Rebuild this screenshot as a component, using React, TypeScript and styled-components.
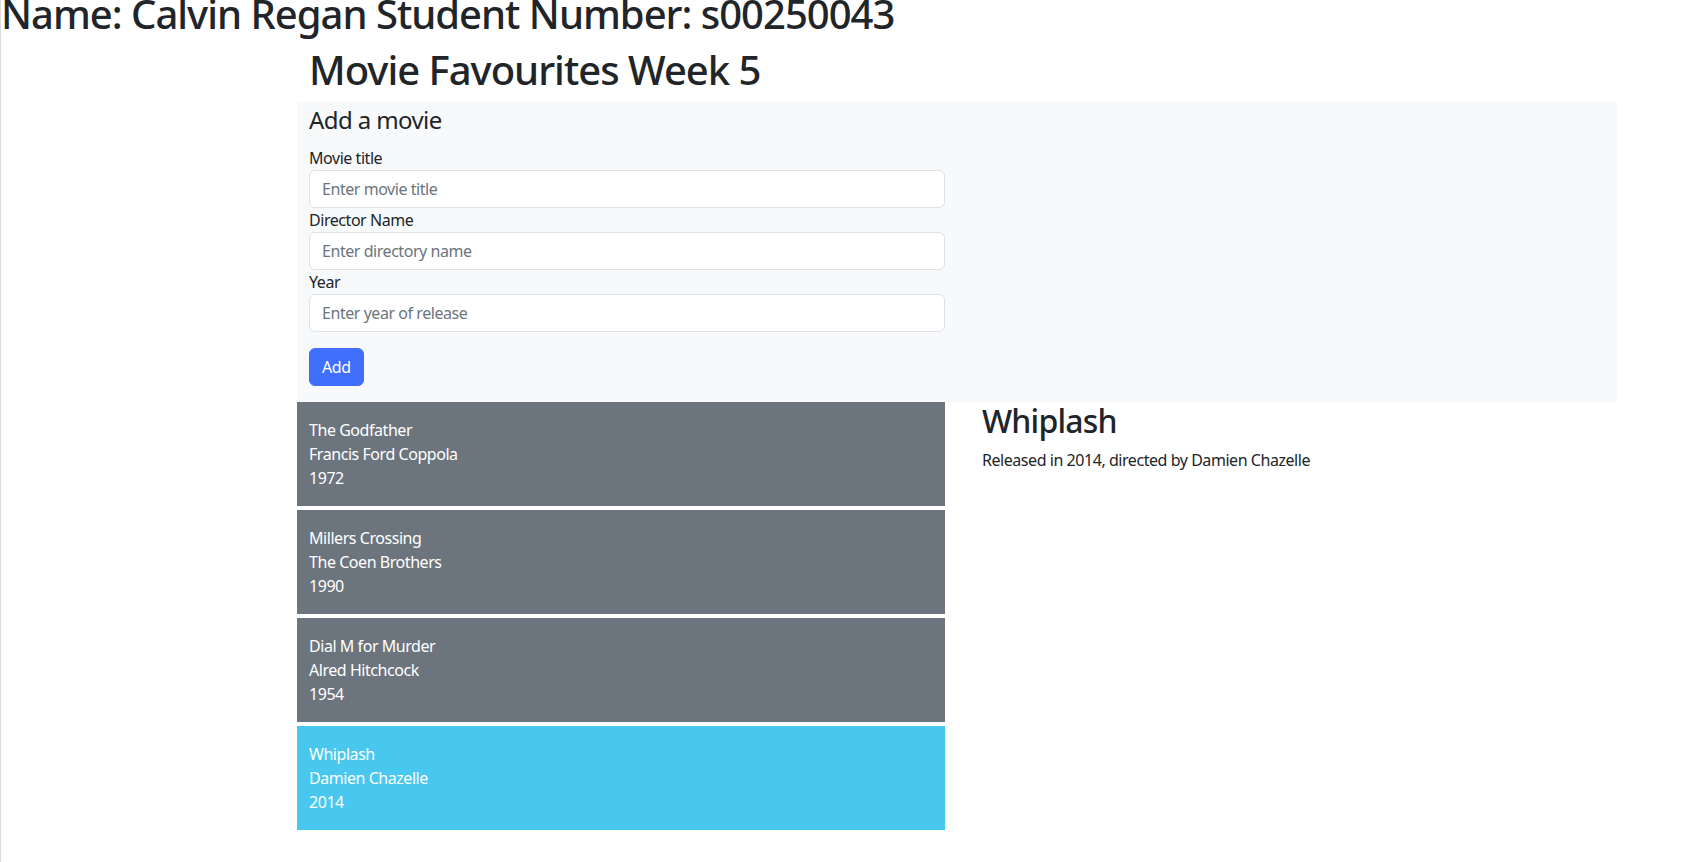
import styled, { createGlobalStyle } from "styled-components";

const GlobalStyle = createGlobalStyle`
  * { box-sizing: border-box; }
  body {
    margin: 0;
    min-height: 862px;
    border-left: 1px solid #dcdcdc;
    background: #fff;
    color: #212529;
    font-family: "Noto Sans", "Open Sans", sans-serif;
    font-size: 16px;
    line-height: 1.5;
    letter-spacing: -0.45px;
  }
`;

// the reference is scrolled down a few pixels
const Page = styled.div`
  margin-top: -10px;
`;

const Heading = styled.h1`
  margin: 0 0 8px;
  font-size: 40px;
  font-weight: 500;
  line-height: 1.2;
  letter-spacing: -1px;
`;

const Container = styled.div`
  width: 1320px;
  margin-left: 296px;
`;

const Title = styled(Heading)`
  padding: 0 12px;
`;

const FormPanel = styled.div`
  padding: 0 12px 16px;
  background: #f8f9fa;
`;

const Form = styled.form`
  display: flex;
  flex-direction: column;
  align-items: flex-start;
  width: 636px;
`;

const Legend = styled.div`
  margin-bottom: 8px;
  font-size: 24px;
  line-height: 1.5;
  letter-spacing: -0.6px;
`;

const Label = styled.label`
  display: block;
`;

const Input = styled.input`
  display: block;
  width: 100%;
  padding: 6px 12px;
  border: 1px solid #dee2e6;
  border-radius: 6px;
  background: #fff;
  color: #212529;
  font: inherit;
  line-height: 1.5;
  letter-spacing: inherit;
  &::placeholder { color: #6c757d; }
`;

const AddButton = styled.button`
  margin-top: 16px;
  padding: 6px 12px;
  border: 1px solid #406efd;
  border-radius: 6px;
  background: #406efd;
  color: #fff;
  font: inherit;
  line-height: 1.5;
  letter-spacing: inherit;
`;

const Lower = styled.div`
  display: grid;
  grid-template-columns: 648px 1fr;
  column-gap: 37px;
`;

const MovieList = styled.div`
  display: flex;
  flex-direction: column;
  gap: 4px;
`;

const MovieCard = styled.div<{ $active?: boolean }>`
  padding: 16px 12px;
  background: ${(p) => (p.$active ? "#48c8ee" : "#6c757d")};
  color: #fff;
`;

const Details = styled.div``;

const DetailTitle = styled.h2`
  margin: 0 0 8px;
  font-size: 32px;
  font-weight: 500;
  line-height: 1.2;
  letter-spacing: -0.8px;
`;

const DetailText = styled.p`
  margin: 0;
`;

const movies = [
  { title: "The Godfather", director: "Francis Ford Coppola", year: 1972 },
  { title: "Millers Crossing", director: "The Coen Brothers", year: 1990 },
  { title: "Dial M for Murder", director: "Alred Hitchcock", year: 1954 },
  { title: "Whiplash", director: "Damien Chazelle", year: 2014 },
];

const App = () => {
  const selected = movies[3];

  return (
    <Page>
      <GlobalStyle />
      <Heading>Name: Calvin Regan Student Number: s00250043</Heading>
      <Container>
        <Title>Movie Favourites Week 5</Title>
        <FormPanel>
          <Form onSubmit={(e) => e.preventDefault()}>
            <Legend>Add a movie</Legend>
            <Label>Movie title</Label>
            <Input placeholder="Enter movie title" />
            <Label>Director Name</Label>
            <Input placeholder="Enter directory name" />
            <Label>Year</Label>
            <Input placeholder="Enter year of release" />
            <AddButton type="submit">Add</AddButton>
          </Form>
        </FormPanel>
        <Lower>
          <MovieList>
            {movies.map((m) => (
              <MovieCard key={m.title} $active={m === selected}>
                <div>{m.title}</div>
                <div>{m.director}</div>
                <div>{m.year}</div>
              </MovieCard>
            ))}
          </MovieList>
          <Details>
            <DetailTitle>{selected.title}</DetailTitle>
            <DetailText>
              Released in {selected.year}, directed by {selected.director}
            </DetailText>
          </Details>
        </Lower>
      </Container>
    </Page>
  );
};

export default App;
